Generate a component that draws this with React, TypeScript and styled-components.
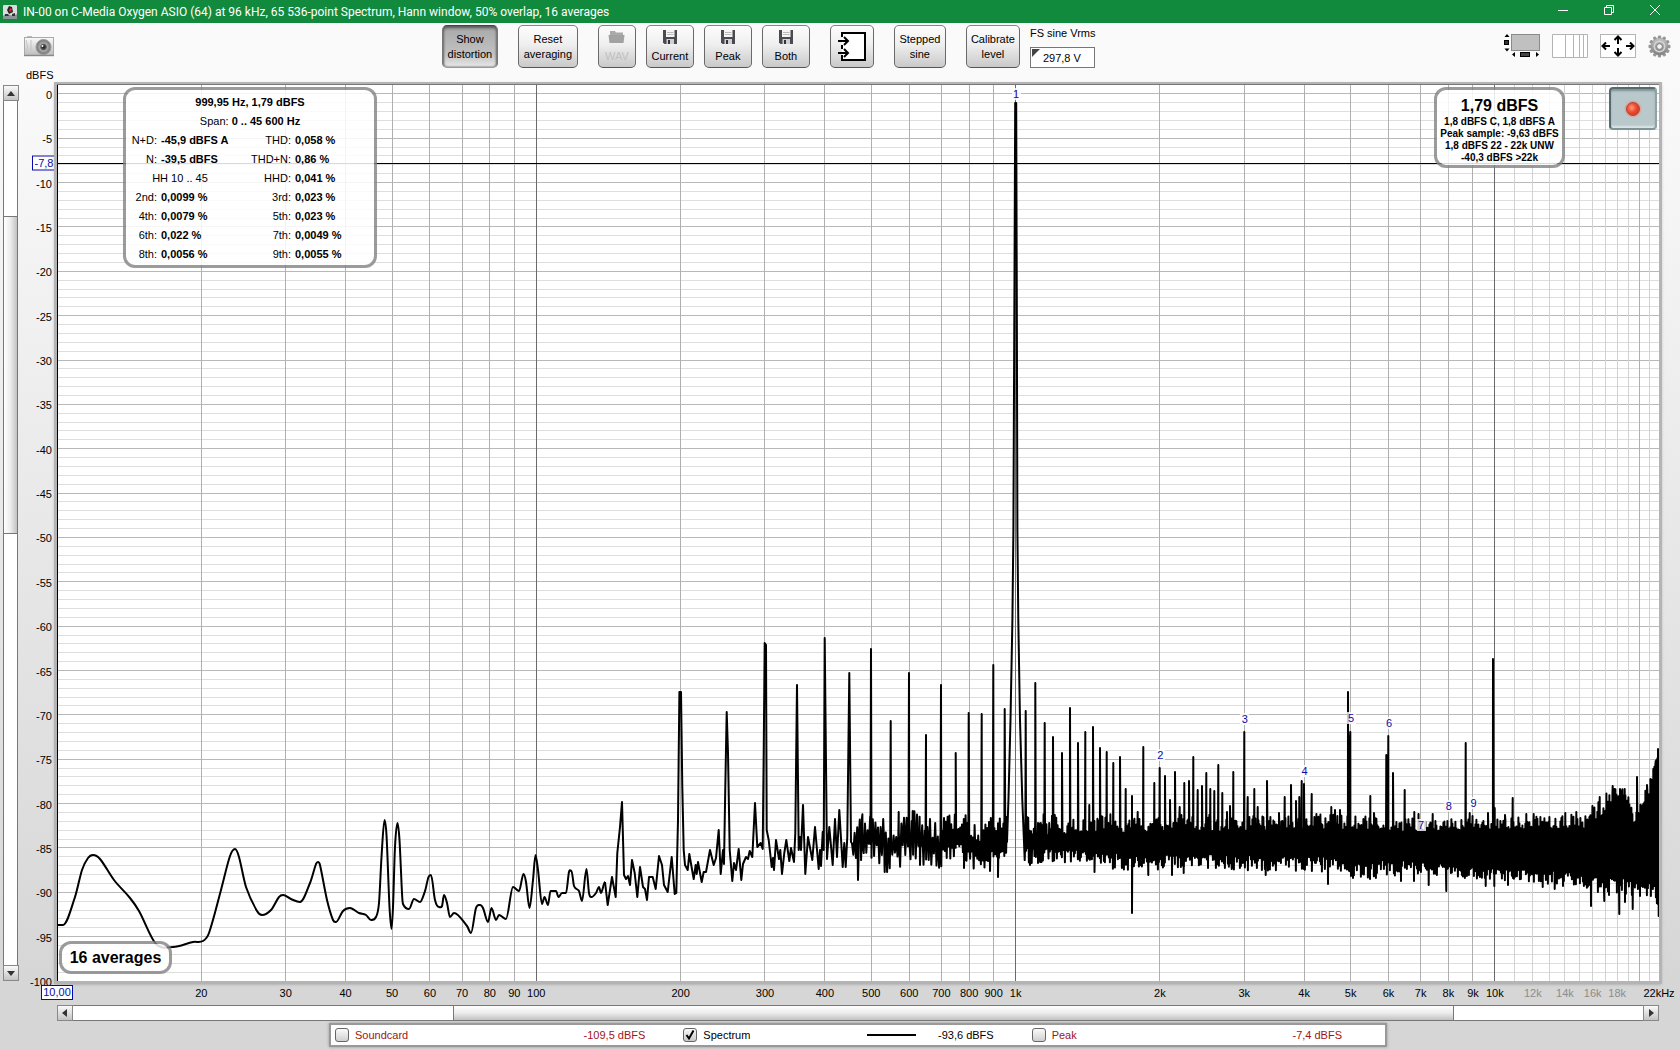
import React from "react";
import styled, { createGlobalStyle, css } from "styled-components";

const UI_FONT = `"Liberation Sans", Arial, sans-serif`;

const GlobalStyle = createGlobalStyle`
  *, *::before, *::after { box-sizing: border-box; }
  body { margin: 0; font: 11px/15px ${UI_FONT}; color: #000; }
  button, input { font: inherit; color: inherit; margin: 0; padding: 0; }
  svg { display: block; }
`;

/* ---------- axes ---------- */

const MIN_FREQ = 10;
const MAX_FREQ = 22000;
const TOP_DB = 1;
const BOTTOM_DB = -100;

const xPct = (freq: number) =>
  `${(Math.log10(freq / MIN_FREQ) / Math.log10(MAX_FREQ / MIN_FREQ)) * 100}%`;
const yPct = (db: number) => `${((TOP_DB - db) / (TOP_DB - BOTTOM_DB)) * 100}%`;

const dbTicks = Array.from({ length: 101 }, (_, i) => -i);

type FreqLine = { freq: number; tone: string };
const freqLines: FreqLine[] = [];
for (const decade of [10, 100, 1000]) {
  for (let n = 2; n <= 10; n++) {
    freqLines.push({ freq: decade * n, tone: n === 10 ? "#6a6a6a" : "#b0b0b0" });
  }
}
for (let k = 11; k <= 21; k++) {
  freqLines.push({ freq: k * 1000, tone: k === 20 ? "#b0b0b0" : "#d2d2d2" });
}

const freqLabels: { freq: number; text: string; minor?: boolean }[] = [
  ...[20, 30, 40, 50, 60, 70, 80, 90, 100, 200, 300, 400, 500, 600, 700, 800, 900].map((f) => ({
    freq: f,
    text: String(f),
  })),
  ...[1, 2, 3, 4, 5, 6, 7, 8, 9, 10].map((k) => ({ freq: k * 1000, text: `${k}k` })),
  ...[12, 14, 16, 18].map((k) => ({ freq: k * 1000, text: `${k}k`, minor: true })),
  { freq: 22000, text: "22kHz" },
];

/* ---------- spectrum trace ---------- */

type Pt = [number, number];

const pairs = (s: string): Pt[] =>
  s
    .trim()
    .split(/\s+/)
    .map((p) => p.split(",").map(Number) as Pt);

const lowBand = pairs(`
58,925 63,925 75,897 82,870 88,858 93,855 100,859 114,880 130,898 139,911 156,944 173,947 193,942 203,941
209,933 221,890 230,856 235,849 239,857 246,887 257,911 262,915 271,910 279,897 283,895 291,899 300,902
310,883 316,864 318,862 320,865 327,900 333,920 336,922 343,911 350,908 359,913 366,915 371,920 376,917
379,903 381.5,857 384.5,820 386.5,835 389.5,907 391.5,929 393,907 395,847 397.5,823 399.5,840 402,893 403,904
409,909 414,899 420,902 425,891 428.5,877 431,875 435,900 439,907 442,906 444,895 447,903 450,917 454,913
467,926 471,933 476,908 480,905 483,908 488,922 491.5,908 496,920 499,915 506,919 513,887 519,891 523.5,874
526,882 529.5,908 533,880 535.5,855 538,870 542,904 544.5,897 548,905 550.5,891 556,891 558.5,897 562,893
566,893 569,872 571.5,871 574,886 579,891 582,901 586.5,869 589,893 591.5,897 596,893 599,887 601,893 605,882`);

const midBand = pairs(`
605,882 607.7,905 612,877 615.7,897 617.3,853 620,827 622,802 624,875 626,879 628,876 630,885 632,860 634.7,873
637.3,897 640,867 643,887 645,889 647,900 649,877 652.7,877 655.7,889 659,856 662,865 664,885 667.7,892
671.7,857 674.7,894 676.3,893 678,820 679.4,692 681,692 682.3,787 683.7,850 685,865 687.7,870 689.3,854
693.7,879 695.7,865 696.7,874 698,862 701.7,882 703.7,872 706,872 708,861 710,850 713.7,865 716,858 718.7,830
720.7,874 723,850 724,864 725.3,787 726.7,712 728,753 729.7,850 732.3,881 734,863 736,870 738.7,849 741.3,880
743,864 746,857 748,859 749.7,851 752.3,857 755,803 757.3,847 760.7,843 762.7,849 763.7,753 764.7,643 766,645
766.7,830 768.7,840 771.7,867 773,858 774,870 776,840 779,859 780.3,850 782,874 784.3,853 786.3,840 789.3,861
791,848 794,862 795.3,833 797,685 798.7,850 800,837 801,850 803,805 805.3,874 808,837 812.3,860 815,827
818.7,869 820,850 821,866 822.7,832 823.7,850 824.7,638 827,859 829.3,827 832.7,865 835,819 837,857 839.3,810
842.7,867 844.3,843 845.7,867 847.3,837 849.3,673 851,842`);

/* x, top of the bulk, top spread, bottom of the bulk, bottom spread */
const envelope = [
  [851, 842, 24, 848, 22],
  [900, 836, 24, 846, 20],
  [1000, 836, 18, 848, 16],
  [1040, 836, 22, 848, 16],
  [1080, 836, 20, 848, 14],
  [1110, 834, 20, 852, 18],
  [1200, 832, 18, 854, 16],
  [1330, 830, 16, 856, 16],
  [1360, 830, 14, 860, 20],
  [1400, 832, 14, 860, 16],
  [1500, 830, 12, 868, 12],
  [1585, 830, 16, 872, 16],
  [1600, 818, 22, 874, 20],
  [1612, 802, 14, 876, 20],
  [1626, 800, 14, 878, 20],
  [1634, 826, 8, 882, 14],
  [1642, 808, 10, 882, 14],
  [1650, 794, 14, 880, 16],
  [1656, 768, 8, 886, 20],
  [1660, 755, 4, 890, 26],
];

const envelopeAt = (x: number) => {
  let i = 1;
  while (i < envelope.length - 1 && envelope[i][0] < x) i++;
  const a = envelope[i - 1];
  const b = envelope[i];
  const t = Math.min(1, Math.max(0, (x - a[0]) / (b[0] - a[0])));
  return a.map((v, k) => v + (b[k] - v) * t);
};

const spikes = pairs(`
858,880 862,818 871,649 884.7,872 890.7,721 898.7,812 909,673 912.7,811 920,865 926,735 941,685 955.7,753
964,868 968.7,713 981.7,714 990,871 993.3,665 998,877 1004.7,709 1025.7,711 1030,865 1035.3,683 1038,863
1044.7,723 1053,737 1062,753 1070,708 1078,743 1085.3,732 1089.3,805 1093,727 1094.5,872 1100,748 1106.7,752
1113.3,763 1120,757 1125.7,789 1132,796 1132,913 1137.7,812 1143.3,747 1148.3,875 1154.3,783 1159.7,768
1165,776 1170,800 1172,875 1175,772 1179.7,807 1183.7,873 1184.3,783 1189,781 1193.3,757 1197.7,790 1202,786
1206.3,773 1208,868 1210.3,789 1214.3,791 1218.3,765 1222.3,793 1227,812 1230,806 1231.7,869 1233.3,772
1244.3,732 1247.7,797 1254.3,789 1257.7,807 1265.7,875 1267,781 1279,813 1284.7,797 1291,785 1296,801
1299.3,797 1301.7,781 1304,784 1311.7,794 1328,884 1331.3,807 1335,810 1340,810 1348,692 1349.3,736 1350.3,732
1351,876 1353,878 1370.3,796 1370,879 1374,813 1386.3,755 1387,760 1388.3,736 1393,773 1401,881 1404.7,790
1414.3,812 1414,881 1418.5,814 1428.7,885 1432.7,814 1446.3,891 1465.7,743 1469.7,813 1472.5,816 1485.7,886
1488,813 1493,659 1494.3,886 1494.7,808 1505,815 1508,885 1512.7,798 1526.3,814 1533.7,814 1542.7,887
1554.7,889 1563,886 1565.3,813 1576.3,812 1591,906 1593,813 1599.7,797 1604.3,901 1609,895 1612.7,786
1619.3,914 1620,789 1624.7,789 1625,902 1632.7,909 1637,777 1640,896 1647,785 1650.7,779 1653.3,769
1655.7,761 1658,749 1658.7,916`);

const fundamental = pairs(`
1007,842 1008.5,798 1010.5,720 1012.4,620 1013.4,530 1014.4,300 1015.2,103 1016.2,103 1016.8,300 1017.4,530
1018.3,620 1020,720 1022.3,800 1024,842`);

const buildTrace = () => {
  let seed = 20417;
  const random = () => {
    seed = (seed * 1664525 + 1013904223) % 4294967296;
    return seed / 4294967296;
  };
  const noise: Pt[] = [];
  let up = true;
  for (let x = 852; x < 1659; x += x < 940 ? 1.3 : x < 1007 ? 0.9 : x < 1060 ? 0.7 : 0.5) {
    if (x > 1007 && x < 1024) continue;
    const [, top, topSpread, bottom, bottomSpread] = envelopeAt(x);
    const reach = Math.pow(random(), x < 1060 ? 1.1 : 1.8);
    const drift = x < 1007 ? 6 * Math.sin(x / 7) : 0;
    noise.push([x, drift + (up ? top - reach * topSpread : bottom + reach * bottomSpread)]);
    up = !up;
  }
  const spikePts = spikes.flatMap(([x, y]): Pt[] => [
    [x - 0.5, 844],
    [x, y],
    [x + 0.5, 844],
  ]);
  return [...noise, ...spikePts, ...fundamental].sort((a, b) => a[0] - b[0]);
};

const smoothPath = (pts: Pt[]) => {
  let d = `M${pts[0][0]} ${pts[0][1]}`;
  for (let i = 0; i < pts.length - 1; i++) {
    const p0 = pts[Math.max(0, i - 1)];
    const p1 = pts[i];
    const p2 = pts[i + 1];
    const p3 = pts[Math.min(pts.length - 1, i + 2)];
    const k = (p2[0] - p1[0]) / 3;
    const slope = (a: Pt, b: Pt, c: Pt) =>
      (b[1] - a[1]) * (c[1] - b[1]) <= 0 ? 0 : (c[1] - a[1]) / (c[0] - a[0] || 1);
    const m1 = slope(p0, p1, p2);
    const m2 = slope(p1, p2, p3);
    d += `C${(p1[0] + k).toFixed(1)} ${(p1[1] + m1 * k).toFixed(1)} ${(p2[0] - k).toFixed(1)} ${(
      p2[1] - m2 * k
    ).toFixed(1)} ${p2[0]} ${p2[1]}`;
  }
  return d;
};

const linePath = (pts: Pt[]) => "M" + pts.map(([x, y]) => `${x.toFixed(1)} ${y.toFixed(1)}`).join("L");

const lowPath = smoothPath(lowBand);
const highPath = linePath([...midBand, ...buildTrace()]);

const harmonics = [
  { n: 1, db: 0 },
  { n: 2, db: -74.5 },
  { n: 3, db: -70.5 },
  { n: 4, db: -76.3 },
  { n: 5, db: -70.3 },
  { n: 6, db: -70.9 },
  { n: 7, db: -82.4 },
  { n: 8, db: -80.3 },
  { n: 9, db: -79.9 },
];

/* ---------- window chrome ---------- */

const Window = styled.div`
  min-height: 100vh;
  display: flex;
  flex-direction: column;
  background: linear-gradient(#fafafa 80px, #d6d6d6 94%);
`;

const TitleBar = styled.header`
  display: flex;
  align-items: center;
  height: 23px;
  padding: 0 2px;
  background: #128a3e;
  color: #fff;
`;

const Title = styled.h1`
  flex: 1;
  margin: 0 0 0 5px;
  font: 400 12px/20px Roboto, "Noto Sans", sans-serif;
  white-space: nowrap;
`;

const CaptionButton = styled.button`
  width: 46px;
  height: 23px;
  display: grid;
  place-items: center;
  padding-bottom: 3px;
  border: 0;
  background: none;
`;

const Toolbar = styled.div`
  display: grid;
  grid-template-columns: 31fr auto 41fr;
  align-items: start;
  height: 45px;
  padding-top: 2px;
`;

const Tools = styled.div`
  display: flex;
  gap: 20px;
`;

const ToolGroup = styled.div`
  display: flex;
  gap: 10px;
`;

const ToolButton = styled.button<{ $w: number; $pressed?: boolean }>`
  width: ${(p) => p.$w}px;
  height: 43px;
  display: flex;
  flex-direction: column;
  align-items: center;
  justify-content: center;
  gap: 5px;
  border: 1px solid #6a6a6a;
  border-color: #858585 #6a6a6a #555;
  border-radius: 5px;
  background: linear-gradient(#fdfdfd, #efefef 45%, #c9c9c9);
  line-height: 15px;
  text-align: center;
  &:disabled {
    color: #c0c0c0;
  }
  ${(p) =>
    p.$pressed &&
    css`
      background: linear-gradient(#a8a8a8, #c2c2c2 70%, #e8e8e8);
      box-shadow: inset 0 2px 3px #555, inset 1px 0 2px #888, inset -1px 0 2px #888;
      border-color: #444 #777 #999;
    `}
`;

const Field = styled.label`
  display: flex;
  flex-direction: column;
  gap: 6px;
  padding-top: 1px;
  line-height: 15px;
`;

const VoltageBox = styled.span`
  position: relative;
  display: block;
  &::before {
    content: "";
    position: absolute;
    left: 2px;
    top: 2px;
    border-top: 8px solid #444;
    border-right: 8px solid transparent;
  }
`;

const VoltageInput = styled.input`
  display: block;
  width: 65px;
  height: 21px;
  padding-left: 12px;
  border: 1px solid #777;
  background: #fff;
`;

const IconButton = styled.button`
  display: grid;
  place-items: center;
  border: 0;
  background: none;
`;

const CameraButton = styled(IconButton)`
  justify-self: start;
  margin: 10px 0 0 24px;
`;

const ViewTools = styled.div`
  display: flex;
  justify-content: flex-end;
  align-items: center;
  gap: 12px;
  padding: 9px 9px 0 0;
`;

/* ---------- chart area ---------- */

const ChartArea = styled.main`
  flex: 1;
  display: grid;
  grid-template-columns: 15px 39px 1fr;
  grid-template-rows: 17px minmax(500px, 1fr) 24px 16px;
  padding: 0 21px 0 3px;
`;

const Unit = styled.span`
  grid-area: 1 / 2;
  padding-left: 8px;
`;

const YAxis = styled.div`
  grid-area: 2 / 2;
  position: relative;
`;

const AxisSvg = styled.svg`
  width: 100%;
  height: 100%;
  overflow: visible;
  font: 11px ${UI_FONT};
`;

const LimitInput = styled.input<{ $w: number }>`
  position: absolute;
  width: ${(p) => p.$w}px;
  height: 15px;
  border: 1px solid #0a0aaa;
  outline: 0;
  background: #fff;
  color: #0a0aaa;
  text-align: center;
`;

const CursorInput = styled(LimitInput)`
  right: 1px;
  transform: translateY(-50%);
`;

const StartInput = styled(LimitInput)`
  left: -16px;
  top: 4px;
`;

const Plot = styled.section`
  grid-area: 2 / 3;
  position: relative;
  background: #fff;
  box-shadow: inset 1px 0 0 #000, 0 -1px 0 #777, 0 0 0 3px #b4b4b4, 0 1px 3px 2px #999;
`;

const PlotSvg = styled.svg`
  position: absolute;
  inset: 0;
  width: 100%;
  height: 100%;
`;

const HarmonicTag = styled.span<{ $x: string; $y: string }>`
  position: absolute;
  left: ${(p) => p.$x};
  top: ${(p) => p.$y};
  width: 9px;
  height: 12px;
  margin: -6px 0 0 -4px;
  line-height: 12px;
  text-align: center;
  color: #0a0aaa;
  background: rgba(255, 255, 255, 0.8);
`;

const Panel = styled.div`
  position: absolute;
  border: 3px solid rgba(130, 130, 130, 0.8);
  border-radius: 12px;
  background: rgba(255, 255, 255, 0.85);
  background-clip: padding-box;
`;

const DistortionPanel = styled(Panel)`
  left: 66px;
  top: 2px;
  width: 254px;
  padding: 3px 0 1px;
`;

const DistortionTable = styled.table`
  width: 100%;
  table-layout: fixed;
  border-collapse: collapse;
  caption {
    height: 19px;
    line-height: 19px;
    font-weight: 700;
  }
  td,
  th {
    height: 19px;
    padding: 0;
    line-height: 19px;
    white-space: nowrap;
  }
  th {
    font-weight: 400;
    text-align: right;
  }
  td {
    padding-left: 4px;
    font-weight: 700;
  }
  th[colspan],
  td[colspan] {
    padding: 0;
    text-align: center;
    font-weight: 400;
  }
`;

const LevelPanel = styled(Panel)`
  right: 94px;
  top: 2px;
  width: 131px;
  height: 81px;
  padding-top: 7px;
  text-align: center;
  font: 700 10px/12px ${UI_FONT};
  white-space: nowrap;
  p {
    margin: 0;
  }
`;

const LevelValue = styled.h2`
  margin: 0 0 1px;
  font: 700 16px/18px ${UI_FONT};
`;

const AveragesPanel = styled(Panel)`
  left: 2px;
  bottom: 7px;
  width: 113px;
  height: 33px;
  font: 700 16px/28px ${UI_FONT};
  text-align: center;
`;

const RecordButton = styled.button`
  position: absolute;
  right: 2px;
  top: 2px;
  width: 48px;
  height: 43px;
  display: grid;
  place-items: center;
  border: 2px solid #5f7377;
  border-color: #566b6f #8fa3a6 #7f9497 #566b6f;
  border-radius: 4px;
  background: #b9c8ca;
  box-shadow: inset 0 2px 2px #7f9396, inset 0 -2px 2px #dce6e7;
`;

const XAxis = styled.div`
  grid-area: 3 / 3;
  position: relative;
`;

/* ---------- scroll bars ---------- */

const ScrollBar = styled.div<{ $vertical?: boolean }>`
  display: flex;
  flex-direction: ${(p) => (p.$vertical ? "column" : "row")};
  grid-area: ${(p) => (p.$vertical ? "2 / 1" : "4 / 3")};
  border: 1px solid #777;
  background: #fff;
`;

const ScrollArrow = styled.button`
  flex: none;
  width: 14px;
  height: 14px;
  display: grid;
  place-items: center;
  border: 0;
  outline: 1px solid #888;
  background: linear-gradient(#fafafa, #c4c4c4);
`;

const TrackGap = styled.div<{ $grow: number }>`
  flex: ${(p) => p.$grow} 1 0;
`;

const Thumb = styled.div<{ $grow: number; $vertical?: boolean }>`
  flex: ${(p) => p.$grow} 1 0;
  outline: 1px solid #777;
  background: linear-gradient(${(p) => (p.$vertical ? "to right" : "to bottom")}, #fff, #ececec 50%, #c2c2c2);
`;

/* ---------- legend ---------- */

const Legend = styled.footer`
  display: grid;
  grid-template-columns: repeat(3, 1fr);
  width: 63%;
  max-width: 1054px;
  height: 20px;
  margin: 4px 19px 5px 55px;
  padding-right: 9px;
  align-self: center;
  background: #fff;
  box-shadow: 0 0 0 2px #999, 0 0 3px 2px #999;
`;

const LegendItem = styled.label<{ $color: string }>`
  display: flex;
  align-items: center;
  gap: 6px;
  padding: 0 34px 0 4px;
  color: ${(p) => p.$color};
`;

const LegendName = styled.span`
  flex: 1;
`;

const LegendLine = styled.i`
  width: 49px;
  height: 2px;
  margin-right: 16px;
  background: #000;
`;

const CheckBox = styled.input`
  appearance: none;
  width: 14px;
  height: 14px;
  border: 1px solid #666;
  border-radius: 3px;
  background: linear-gradient(#fafafa, #d0d0d0);
  &:checked {
    background: url("data:image/svg+xml,%3Csvg xmlns='http://www.w3.org/2000/svg' viewBox='0 0 12 12'%3E%3Cpath d='M2.5 6l2.5 3.5L9.5 1.5' fill='none' stroke='%23000' stroke-width='2'/%3E%3C/svg%3E"),
      linear-gradient(#fafafa, #c8c8c8);
  }
`;

/* ---------- icons ---------- */

const AppIcon = () => (
  <svg width="16" height="16" viewBox="0 0 16 16">
    <rect x="1" y="1" width="14" height="14" rx="1" fill="#d9dde0" />
    <path d="M1 12c3-3 4-2 7-1s5 0 7-1v5H1z" fill="#8d9499" />
    <path d="M7 2l3 1 1 5-4 2-2-4z" fill="#222" />
    <path d="M8 4l2 1-1 3-2-1z" fill="#e0262c" />
    <path d="M3 10h3l1 2H3zM10 10l3-1v3h-3z" fill="#333" />
  </svg>
);

const CameraIcon = () => (
  <svg width="30" height="22" viewBox="0 0 30 22">
    <defs>
      <linearGradient id="camBody" x1="0" y1="0" x2="0" y2="1">
        <stop offset="0" stopColor="#fafafa" />
        <stop offset="1" stopColor="#bcbcbc" />
      </linearGradient>
      <radialGradient id="camLens">
        <stop offset="0" stopColor="#111" />
        <stop offset="0.35" stopColor="#555" />
        <stop offset="0.5" stopColor="#aaa" />
        <stop offset="0.75" stopColor="#8a8a8a" />
        <stop offset="1" stopColor="#777" />
      </radialGradient>
    </defs>
    <path d="M3 1h5v2H3z" fill="#bbb" />
    <rect x="0.5" y="2.5" width="29" height="18" fill="url(#camBody)" stroke="#aaa" />
    <path d="M0 20.5h30" stroke="#888" strokeWidth="1.4" />
    <path d="M2 5q3 7 0 14M7 5v11" stroke="#c4c4c4" fill="none" />
    <circle cx="19.5" cy="12" r="7.5" fill="url(#camLens)" stroke="#999" />
    <circle cx="18.5" cy="11" r="1" fill="#fff" />
  </svg>
);

const FloppyIcon = () => (
  <svg width="14" height="14" viewBox="0 0 14 14">
    <path d="M0 0h14v14H1.5L0 12.5z" fill="#4a4a50" />
    <rect x="3" y="0" width="8.5" height="7" fill="#f4f4f4" />
    <path d="M4 2.5h6.5M4 4.5h6.5" stroke="#bbb" />
    <rect x="3.5" y="9" width="7.5" height="5" fill="#cfd0d6" />
    <rect x="5" y="10" width="2" height="4" fill="#333" />
  </svg>
);

const FolderIcon = () => (
  <svg width="17" height="14" viewBox="0 0 17 14">
    <path d="M2 1h5l1 1.5h7V6H2z" fill="#aaa" />
    <path d="M0.5 5h16L15.5 13h-14z" fill="#a2a2a2" />
  </svg>
);

const InputsIcon = () => (
  <svg width="30" height="31" viewBox="0 0 30 31">
    <rect x="5" y="2" width="23" height="27" fill="#fff" />
    <path d="M5 6V2h23v27H5v-5M5 14v4" fill="none" stroke="#000" strokeWidth="2" />
    <path d="M1 10h9M7 6l4 4-4 4M1 22h9M7 18l4 4-4 4" fill="none" stroke="#000" strokeWidth="2" />
  </svg>
);

const AxisRangeIcon = () => (
  <svg width="36" height="24" viewBox="0 0 36 24">
    <rect x="7.5" y="0.5" width="28" height="16" fill="#c0c0c0" stroke="#8a8a8a" />
    <path d="M0.5 3L3 0l2.5 3zM0.5 14.5L3 17.5l2.5-3zM11 18v5l-3-2.5zM32 18v5l3-2.5z" fill="#000" />
    <rect x="0.5" y="6.5" width="4" height="4" fill="#333" stroke="#000" />
    <rect x="16.5" y="18.5" width="9" height="4" fill="#444" stroke="#000" />
  </svg>
);

const LogGridIcon = () => (
  <svg width="36" height="24" viewBox="0 0 36 24">
    <path
      d="M0.5 0.5h35v23h-35zM13.5 0v24M21.5 0v24M27.5 0v24M31.5 0v24"
      fill="#fff"
      stroke="#b4b4b4"
    />
  </svg>
);

const FitIcon = () => (
  <svg width="36" height="24" viewBox="0 0 36 24">
    <rect x="0.5" y="0.5" width="35" height="23" fill="#fff" stroke="#b4b4b4" />
    <path
      d="M10 12H3M6 8.5L2.5 12 6 15.5M26 12h7M30 8.5l3.5 3.5-3.5 3.500M18 10V3M14.5 6L18 2.5 21.5 6M18 14v7M14.5 18l3.5 3.5 3.5-3.5"
      fill="none"
      stroke="#000"
      strokeWidth="2"
    />
  </svg>
);

const GearIcon = () => (
  <svg width="23" height="23" viewBox="-12 -12 24 24">
    <defs>
      <linearGradient id="gear" x1="0" y1="0" x2="0" y2="1">
        <stop offset="0" stopColor="#c4c4c4" />
        <stop offset="1" stopColor="#808080" />
      </linearGradient>
    </defs>
    {Array.from({ length: 12 }, (_, i) => (
      <rect key={i} x="-1.7" y="-11.5" width="3.4" height="5" rx="1" fill="#999" transform={`rotate(${i * 30})`} />
    ))}
    <circle r="9" fill="url(#gear)" stroke="#888" strokeWidth="0.5" />
    <circle r="5.5" fill="none" stroke="#d6d6d6" strokeWidth="1.5" />
    <circle r="3" fill="#f4f4f4" stroke="#777" />
  </svg>
);

const RecordIcon = () => (
  <svg width="18" height="18" viewBox="0 0 18 18">
    <defs>
      <radialGradient id="rec" cx="0.4" cy="0.4">
        <stop offset="0" stopColor="#ff9a80" />
        <stop offset="0.7" stopColor="#f04a30" />
        <stop offset="1" stopColor="#d84028" />
      </radialGradient>
    </defs>
    <circle cx="9" cy="9" r="8.5" fill="#d3aaa2" />
    <circle cx="9" cy="9" r="6.5" fill="url(#rec)" stroke="#b04a3c" />
  </svg>
);

const arrowPaths = {
  up: "M0 7L4 2l4 5z",
  down: "M0 2l4 5 4-5z",
  left: "M6 0L1 4l5 4z",
  right: "M2 0l5 4-5 4z",
};

const ArrowIcon = ({ dir }: { dir: keyof typeof arrowPaths }) => (
  <svg width="8" height="8" viewBox="0 0 8 8">
    <path d={arrowPaths[dir]} fill="#333" />
  </svg>
);

/* ---------- page ---------- */

const distortionRows = [
  ["2nd:", "0,0099 %", "3rd:", "0,023 %"],
  ["4th:", "0,0079 %", "5th:", "0,023 %"],
  ["6th:", "0,022 %", "7th:", "0,0049 %"],
  ["8th:", "0,0056 %", "9th:", "0,0055 %"],
];

const DataRow = ({ cells }: { cells: string[] }) => (
  <tr>
    <th scope="row">{cells[0]}</th>
    <td>{cells[1]}</td>
    <th scope="row">{cells[2]}</th>
    <td>{cells[3]}</td>
  </tr>
);

export default function App() {
  return (
    <Window>
      <GlobalStyle />
      <TitleBar>
        <AppIcon />
        <Title>
          IN-00 on C-Media Oxygen ASIO (64) at 96 kHz, 65 536-point Spectrum, Hann window, 50% overlap, 16 averages
        </Title>
        <CaptionButton aria-label="Minimize">
          <svg width="10" height="10" viewBox="0 0 10 10">
            <path d="M0 5.5h10" stroke="#fff" />
          </svg>
        </CaptionButton>
        <CaptionButton aria-label="Restore">
          <svg width="10" height="10" viewBox="0 0 10 10">
            <path d="M0.5 2.5h7v7h-7zM2.5 2.5v-2h7v7h-2" fill="none" stroke="#fff" />
          </svg>
        </CaptionButton>
        <CaptionButton aria-label="Close">
          <svg width="10" height="10" viewBox="0 0 10 10">
            <path d="M0 0l10 10M10 0L0 10" stroke="#fff" />
          </svg>
        </CaptionButton>
      </TitleBar>

      <Toolbar>
        <CameraButton aria-label="Capture image">
          <CameraIcon />
        </CameraButton>
        <Tools>
          <ToolButton $w={56} $pressed aria-pressed="true">
            Show distortion
          </ToolButton>
          <ToolButton $w={60}>Reset averaging</ToolButton>
          <ToolGroup>
            <ToolButton $w={38} disabled>
              <FolderIcon />
              WAV
            </ToolButton>
            <ToolButton $w={48}>
              <FloppyIcon />
              Current
            </ToolButton>
            <ToolButton $w={48}>
              <FloppyIcon />
              Peak
            </ToolButton>
            <ToolButton $w={48}>
              <FloppyIcon />
              Both
            </ToolButton>
          </ToolGroup>
          <ToolButton $w={44} aria-label="Input selection">
            <InputsIcon />
          </ToolButton>
          <ToolButton $w={52}>Stepped sine</ToolButton>
          <ToolGroup>
            <ToolButton $w={54}>Calibrate level</ToolButton>
            <Field>
              FS sine Vrms
              <VoltageBox>
                <VoltageInput defaultValue="297,8 V" />
              </VoltageBox>
            </Field>
          </ToolGroup>
        </Tools>
        <ViewTools>
          <IconButton aria-label="Axis ranges">
            <AxisRangeIcon />
          </IconButton>
          <IconButton aria-label="Logarithmic axis">
            <LogGridIcon />
          </IconButton>
          <IconButton aria-label="Fit to data">
            <FitIcon />
          </IconButton>
          <IconButton aria-label="Settings">
            <GearIcon />
          </IconButton>
        </ViewTools>
      </Toolbar>

      <ChartArea>
        <Unit>dBFS</Unit>
        <ScrollBar $vertical>
          <ScrollArrow aria-label="Scroll up">
            <ArrowIcon dir="up" />
          </ScrollArrow>
          <TrackGap $grow={117} />
          <Thumb $grow={315} $vertical />
          <TrackGap $grow={433} />
          <ScrollArrow aria-label="Scroll down">
            <ArrowIcon dir="down" />
          </ScrollArrow>
        </ScrollBar>

        <YAxis>
          <AxisSvg>
            {dbTicks
              .filter((db) => db % 5 === 0)
              .map((db) => (
                <text key={db} x="34" y={yPct(db)} dy="5" textAnchor="end">
                  {String(Math.abs(db) === 0 ? 0 : db)}
                </text>
              ))}
          </AxisSvg>
          <CursorInput $w={24} style={{ top: yPct(-7.8) }} defaultValue="-7,8" aria-label="Cursor level" />
        </YAxis>

        <Plot aria-label="Spectrum">
          <PlotSvg shapeRendering="crispEdges">
            {dbTicks.map((db) => (
              <line
                key={db}
                x1="0"
                x2="100%"
                y1={yPct(db)}
                y2={yPct(db)}
                stroke={db % 5 === 0 ? "#b8b8b8" : "#dedede"}
              />
            ))}
            {freqLines.map(({ freq, tone }) => (
              <line key={freq} x1={xPct(freq)} x2={xPct(freq)} y1="0" y2="100%" stroke={tone} />
            ))}
            <line x1="0" x2="100%" y1={yPct(-7.8)} y2={yPct(-7.8)} stroke="#000" />
            <line x1="0" x2="0" y1="0" y2="100%" stroke="#000" strokeWidth="2" />
          </PlotSvg>
          <PlotSvg viewBox="57 85 1602 896" preserveAspectRatio="none">
            <g fill="none" stroke="#000" strokeWidth="2" strokeLinejoin="round">
              <path d={lowPath} vectorEffect="non-scaling-stroke" />
              <path d={highPath} vectorEffect="non-scaling-stroke" />
            </g>
          </PlotSvg>
          {harmonics.map(({ n, db }) => (
            <HarmonicTag key={n} $x={xPct(n * 1000)} $y={yPct(db)}>
              {n}
            </HarmonicTag>
          ))}

          <DistortionPanel>
            <DistortionTable>
              <caption>999,95 Hz, 1,79 dBFS</caption>
              <colgroup>
                <col style={{ width: 31 }} />
                <col style={{ width: 77 }} />
                <col style={{ width: 57 }} />
                <col />
              </colgroup>
              <tbody>
                <tr>
                  <td colSpan={4}>
                    Span: <b>0 .. 45 600 Hz</b>
                  </td>
                </tr>
                <DataRow cells={["N+D:", "-45,9 dBFS A", "THD:", "0,058 %"]} />
                <DataRow cells={["N:", "-39,5 dBFS", "THD+N:", "0,86 %"]} />
                <tr>
                  <td colSpan={2}>HH 10 .. 45</td>
                  <th scope="row">HHD:</th>
                  <td>0,041 %</td>
                </tr>
                {distortionRows.map((cells) => (
                  <DataRow key={cells[0]} cells={cells} />
                ))}
              </tbody>
            </DistortionTable>
          </DistortionPanel>

          <LevelPanel>
            <LevelValue>1,79 dBFS</LevelValue>
            <p>1,8 dBFS C, 1,8 dBFS A</p>
            <p>Peak sample: -9,63 dBFS</p>
            <p>1,8 dBFS 22 - 22k UNW</p>
            <p>-40,3 dBFS &gt;22k</p>
          </LevelPanel>

          <RecordButton aria-label="Record">
            <RecordIcon />
          </RecordButton>

          <AveragesPanel>16 averages</AveragesPanel>
        </Plot>

        <XAxis>
          <AxisSvg>
            {freqLabels.map(({ freq, text, minor }) => (
              <text key={freq} x={xPct(freq)} y="16" textAnchor="middle" fill={minor ? "#8c8c8c" : "#000"}>
                {text}
              </text>
            ))}
          </AxisSvg>
          <StartInput $w={32} defaultValue="10,00" aria-label="Start frequency" />
        </XAxis>

        <ScrollBar>
          <ScrollArrow aria-label="Scroll left">
            <ArrowIcon dir="left" />
          </ScrollArrow>
          <TrackGap $grow={382} />
          <Thumb $grow={999} />
          <TrackGap $grow={191} />
          <ScrollArrow aria-label="Scroll right">
            <ArrowIcon dir="right" />
          </ScrollArrow>
        </ScrollBar>
      </ChartArea>

      <Legend>
        <LegendItem $color="#a01414">
          <CheckBox type="checkbox" />
          <LegendName>Soundcard</LegendName>
          <span>-109,5 dBFS</span>
        </LegendItem>
        <LegendItem $color="#000">
          <CheckBox type="checkbox" defaultChecked />
          <LegendName>Spectrum</LegendName>
          <LegendLine />
          <span>-93,6 dBFS</span>
        </LegendItem>
        <LegendItem $color="#a01414">
          <CheckBox type="checkbox" />
          <LegendName>Peak</LegendName>
          <span>-7,4 dBFS</span>
        </LegendItem>
      </Legend>
    </Window>
  );
}
